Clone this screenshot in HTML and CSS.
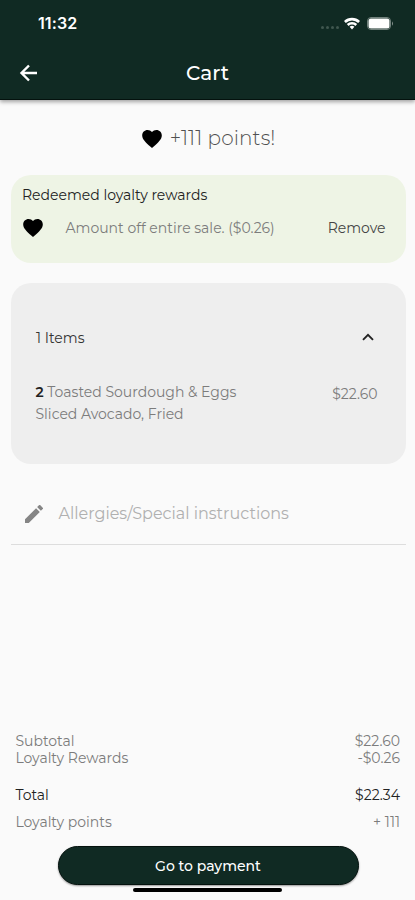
FILE: index.html
```html
<!DOCTYPE html>
<html lang="en">
<head>
<meta charset="utf-8">
<meta name="viewport" content="width=device-width, initial-scale=1">
<title>Cart</title>
<link rel="stylesheet" href="styles.css">
</head>
<body>
<header class="header">
  <div class="status">
    <span class="time">11:32</span>
    <div class="status-icons">
      <span class="dots"><i></i><i></i><i></i><i></i></span>
      <svg class="wifi" viewBox="0 0 16 13"><path d="M0 4.1a11.5 11.5 0 0 1 16 0L14.2 6a8.9 8.9 0 0 0-12.4 0Z"/><path d="M2.8 7a7.5 7.5 0 0 1 10.4 0l-1.8 1.9a4.9 4.9 0 0 0-6.8 0Z"/><path d="M5.6 9.8a3.5 3.5 0 0 1 4.8 0L8 12.4Z"/></svg>
      <svg class="battery" viewBox="0 0 27 13"><rect x=".5" y=".5" width="23" height="12" rx="3.5" fill="none" stroke="#71817c"/><rect x="1.500" y="1.500" width="21" height="10" rx="2.500" fill="#fff"/><path d="M25 4.2q2 2.3 0 4.6Z" fill="#84918d"/></svg>
    </div>
  </div>
  <nav class="nav">
    <svg class="back" viewBox="0 0 24 24"><path d="M20 12H5M12 4.500 4.500 12l7.500 7.500"/></svg>
    <h1 class="title">Cart</h1>
    <span></span>
  </nav>
</header>
<main class="main">
  <div class="points">
    <svg class="heart" viewBox="2 3 20 18.350"><path d="M12 21.350 10.550 20.030C5.400 15.360 2 12.280 2 8.500 2 5.420 4.420 3 7.500 3c1.740 0 3.410.81 4.500 2.090C13.090 3.810 14.760 3 16.500 3 19.580 3 22 5.420 22 8.500c0 3.780-3.400 6.860-8.550 11.540Z"/></svg>
    <span class="points-text">+111 points!</span>
  </div>
  <section class="rewards">
    <h2 class="rewards-title">Redeemed loyalty rewards</h2>
    <div class="reward-row">
      <svg class="heart" viewBox="2 3 20 18.350"><path d="M12 21.350 10.550 20.030C5.400 15.360 2 12.280 2 8.500 2 5.420 4.420 3 7.500 3c1.740 0 3.410.81 4.500 2.090C13.090 3.810 14.760 3 16.500 3 19.580 3 22 5.420 22 8.500c0 3.780-3.400 6.860-8.550 11.540Z"/></svg>
      <span class="reward-text">Amount off entire sale. ($0.26)</span>
      <span class="remove">Remove</span>
    </div>
  </section>
  <section class="items">
    <div class="items-head">
      <span class="count">1 Items</span>
      <svg class="chevron" viewBox="0 0 12 8"><path d="m1 6.800 5-5 5 5"/></svg>
    </div>
    <div class="item">
      <div class="item-text">
        <div class="item-name"><b>2</b> Toasted Sourdough &amp; Eggs</div>
        <div class="item-options">Sliced Avocado, Fried</div>
      </div>
      <span class="price">$22.60</span>
    </div>
  </section>
  <div class="note">
    <svg class="pencil" viewBox="3 3 18 18"><path d="M3 17.250V21h3.750L17.810 9.940l-3.750-3.750ZM20.710 7.040a1 1 0 0 0 0-1.410l-2.340-2.340a1 1 0 0 0-1.410 0l-1.830 1.830 3.750 3.750Z"/></svg>
    <span class="note-text">Allergies/Special instructions</span>
  </div>
</main>
<footer class="footer">
  <div class="row"><span>Subtotal</span><span>$22.60</span></div>
  <div class="row"><span>Loyalty Rewards</span><span>-$0.26</span></div>
  <div class="row total"><span>Total</span><span>$22.34</span></div>
  <div class="row earned"><span>Loyalty points</span><span>+ 111</span></div>
  <div class="pay">Go to payment</div>
  <div class="home"></div>
</footer>
</body>
</html>
```

FILE: styles.css
```css
* { box-sizing: border-box; }
body {
  margin: 0;
  width: 415px;
  height: 900px;
  display: flex;
  flex-direction: column;
  overflow: hidden;
  background: #fafafa;
  color: #7c7c7c;
  font: 400 14px/17px Montserrat, Inter, sans-serif;
  white-space: nowrap;
}
svg { display: block; flex: none; }
h1, h2 { margin: 0; }

.header {
  height: 100px;
  flex: none;
  background: #102a23;
  border-bottom: 1px solid #04120e;
  box-shadow: 0 2px 4px rgba(0, 0, 0, .35);
  color: #fff;
}
.status {
  height: 46px;
  padding: 0 21px 0 38px;
  display: flex;
  align-items: center;
  justify-content: space-between;
}
.time { font-family: Inter, sans-serif; font-size: 16px; font-weight: 600; letter-spacing: .1px; }
.status-icons { display: flex; align-items: center; }
.dots { display: flex; gap: 2px; margin: 8px 5px 0 0; }
.dots i { width: 3px; height: 3px; border-radius: 50%; background: #40574f; }
.wifi { width: 16px; height: 13px; margin-right: 7px; fill: #fff; }
.battery { width: 27px; height: 13px; }
.nav {
  height: 53px;
  padding: 0 17px;
  display: grid;
  grid-template-columns: 24px 1fr 24px;
  align-items: center;
}
.back { width: 24px; height: 24px; fill: none; stroke: #fff; stroke-width: 2.400; }
.title { text-align: center; font-size: 20px; line-height: 24px; font-weight: 500; }

.main { flex: 1; padding: 0 9.500px 0 10.700px; }
.points {
  height: 75px;
  padding-top: 2px;
  display: flex;
  align-items: center;
  justify-content: center;
  gap: 8px;
  color: #505050;
  font-size: 20px;
  font-weight: 300;
  letter-spacing: .1px;
}
.heart { width: 20px; height: 18px; fill: #000; }
.points .heart { margin-left: 1px; }
.rewards {
  height: 88px;
  padding: 12px 20px 0 11.300px;
  border-radius: 20px;
  background: #eef4e5;
}
.rewards-title { font-size: 14px; line-height: 17px; font-weight: 400; color: #222; }
.reward-row { display: flex; align-items: center; height: 18px; margin: 15px 0 0 1.500px; }
.reward-text { margin-left: 22px; }
.remove { margin-left: auto; color: #444; }
.items {
  height: 181px;
  margin-top: 20px;
  padding: 46px 28px 0 24.800px;
  border-radius: 20px;
  background: #eee;
}
.items-head { display: flex; justify-content: space-between; align-items: center; height: 18px; color: #333; }
.count { margin-left: .5px; }
.chevron { width: 12px; height: 8px; margin: -2px 4px 0 0; fill: none; stroke: #222; stroke-width: 1.900; }
.item { display: flex; justify-content: space-between; margin-top: 34px; line-height: 22px; }
.item b { font-weight: 600; color: #222; }
.item .price { margin-top: 2px; }
.note {
  height: 81px;
  display: flex;
  align-items: center;
  padding: 18px 15px 0 14.500px;
  border-bottom: 1px solid #ddd;
  color: #b0b0b0;
  font-size: 16px;
}
.pencil { width: 18px; height: 18px; margin-top: 1px; fill: #858585; }
.note-text { margin-left: 15.300px; }

.footer { height: 168px; flex: none; padding: 1px 15px 0; }
.row { display: flex; justify-content: space-between; height: 17px; }
.row span:first-child { margin-left: .4px; }
.total { margin-top: 20px; color: #222; }
.earned { margin-top: 10px; }
.pay {
  width: 301px;
  height: 39px;
  margin: 15px 0 0 42.500px;
  border: 1px solid #04120e;
  border-radius: 20px;
  background: #102a23;
  box-shadow: 0 1px 2px rgba(0, 0, 0, .4);
  color: #fff;
  font-weight: 500;
  line-height: 38px;
  text-align: center;
}
.home { width: 149px; height: 4px; margin: 3px auto 0; border-radius: 2px; background: #000; }
```
